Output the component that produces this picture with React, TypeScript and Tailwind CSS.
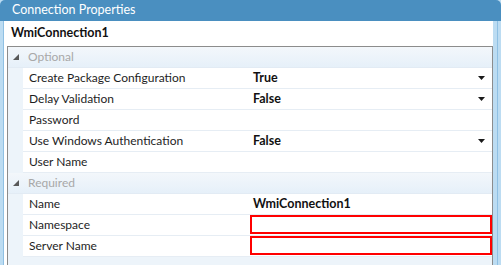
import React from 'react'

type Prop = { name: string; value?: string; dropdown?: boolean; invalid?: boolean }

const optional: Prop[] = [
  { name: 'Create Package Configuration', value: 'True', dropdown: true },
  { name: 'Delay Validation', value: 'False', dropdown: true },
  { name: 'Password' },
  { name: 'Use Windows Authentication', value: 'False', dropdown: true },
  { name: 'User Name' },
]

const required: Prop[] = [
  { name: 'Name', value: 'WmiConnection1' },
  { name: 'Namespace', invalid: true },
  { name: 'Server Name', invalid: true },
]

function Expander() {
  return (
    <svg width="7" height="7" viewBox="0 0 7 7" className="block">
      <polygon points="6,0 6,6 0,6" fill="#595959" />
    </svg>
  )
}

function DropArrow() {
  return (
    <svg width="7" height="4" viewBox="0 0 7 4" className="block">
      <polygon points="0,0 7,0 3.5,4" fill="#1a1a1a" />
    </svg>
  )
}

function Category({ label }: { label: string }) {
  return (
    <div className="flex h-[21px] items-center border-b border-[#e2ebf4] bg-gradient-to-b from-[#f3f7fb] to-[#e6f0f9]">
      <div className="flex w-[15px] justify-center pl-[2px]">
        <Expander />
      </div>
      <span className="pl-[5px] text-[12px] text-[#a8a8a8]">{label}</span>
    </div>
  )
}

function Row({ p }: { p: Prop }) {
  return (
    <div className="flex h-[21px]">
      <div className="w-[15px] bg-[#edf4fa]" />
      <div className="flex w-[227px] items-center border-b border-[#e6edf4] bg-white pl-[6px] text-[12px] text-[#1e1e1e]">
        {p.name}
      </div>
      <div className="flex flex-1 items-center border-b border-[#e6edf4] bg-white">
        {p.invalid ? (
          <div className="mb-[1px] h-[19px] w-full border-2 border-[#ff0000]" />
        ) : (
          <div className="flex w-full items-center justify-between pl-[3px] pr-[7px]">
            <span className="text-[12.5px] font-bold text-[#111]">{p.value}</span>
            {p.dropdown ? <DropArrow /> : null}
          </div>
        )}
      </div>
    </div>
  )
}

export default function App() {
  return (
    <div
      className="h-[265px] w-[501px] overflow-hidden bg-[#bcdcf2]"
      style={{ fontFamily: 'Lato, "Liberation Sans", sans-serif' }}
    >
      {/* Title */}
      <div className="flex h-[21px] items-center rounded-t-[5px] bg-[#4a8fc0] pl-[12px] text-[12.5px] text-white">
        Connection Properties
      </div>

      <div className="flex h-[244px]">
        <div className="w-[3px] bg-[#bcdcf2]" />
        <div className="w-[1px] bg-[#8fc0e3]" />

        <div className="flex flex-1 flex-col bg-white">
          <div className="flex h-[25px] items-center pl-[7px] text-[12.5px] font-bold text-[#111]">
            WmiConnection1
          </div>

          <div className="ml-[3px] flex-1 border-l border-t border-r border-[#8c8c8c] bg-[#edf4fa]">
            <Category label="Optional" />
            {optional.map((p) => (
              <Row key={p.name} p={p} />
            ))}
            <Category label="Required" />
            {required.map((p) => (
              <Row key={p.name} p={p} />
            ))}
          </div>
        </div>

        <div className="w-[4px] bg-[#bcdcf2]" />
        <div className="w-[1px] bg-[#8fc0e3]" />
        <div className="w-[3px] bg-[#bcdcf2]" />
      </div>
    </div>
  )
}
